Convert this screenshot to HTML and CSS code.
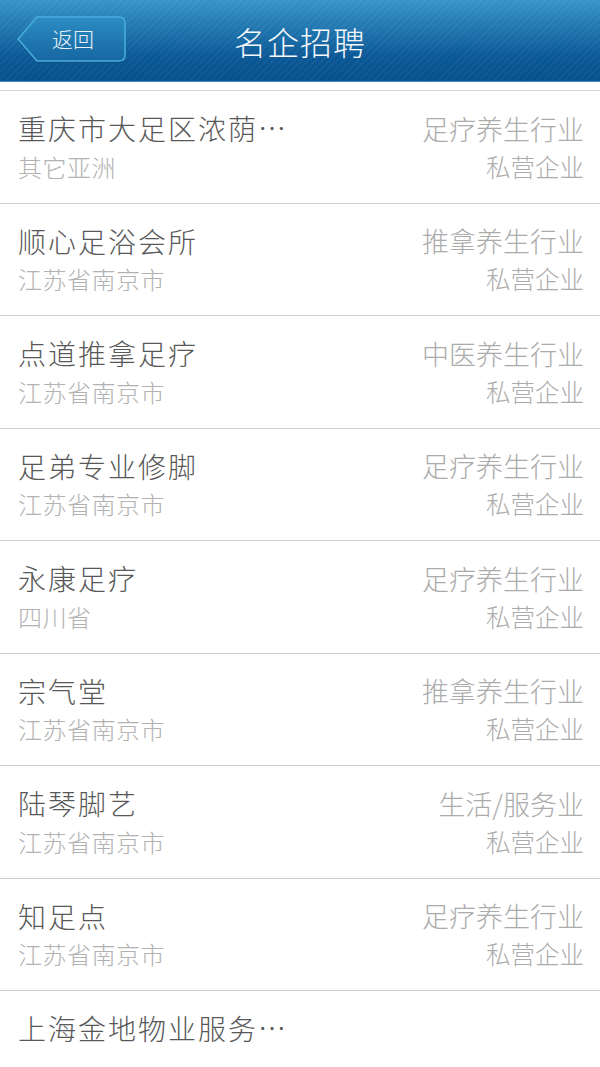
FILE: index.html
```html
<!DOCTYPE html>
<html lang="zh-CN">
<head>
  <meta charset="UTF-8" />
  <meta name="viewport" content="width=device-width, initial-scale=1.0"/>
  <title>名企招聘</title>
  <link rel="stylesheet" href="styles.css">
</head>
<body>

  <header class="topbar">
    <div class="back">
      <svg class="back-shape" width="112" height="50" viewBox="0 0 112 50">
        <defs>
          <linearGradient id="btnFill" x1="0" y1="0" x2="0" y2="1">
            <stop offset="0" stop-color="#2c8cc3"/>
            <stop offset="1" stop-color="#1667a2"/>
          </linearGradient>
        </defs>
        <path d="M2 26 L21 4 H103 Q109 4 109 10 V42 Q109 48 103 48 H21 Z" fill="#0a4a7c" opacity="0.6"/>
        <path d="M2 24 L21 2 H103 Q109 2 109 8 V40 Q109 46 103 46 H21 Z" fill="url(#btnFill)" stroke="#48aedd" stroke-width="1.5"/>
      </svg>
      <span class="back-label">返回</span>
    </div>
    <h1 class="title">名企招聘</h1>
    <div></div>
  </header>

  <ul class="list" id="companyList"></ul>

  <script>
    const companies = [
      { name: "重庆市大足区浓荫…", area: "其它亚洲", trade: "足疗养生行业", kind: "私营企业" },
      { name: "顺心足浴会所", area: "江苏省南京市", trade: "推拿养生行业", kind: "私营企业" },
      { name: "点道推拿足疗", area: "江苏省南京市", trade: "中医养生行业", kind: "私营企业" },
      { name: "足弟专业修脚", area: "江苏省南京市", trade: "足疗养生行业", kind: "私营企业" },
      { name: "永康足疗", area: "四川省", trade: "足疗养生行业", kind: "私营企业" },
      { name: "宗气堂", area: "江苏省南京市", trade: "推拿养生行业", kind: "私营企业" },
      { name: "陆琴脚艺", area: "江苏省南京市", trade: "生活/服务业", kind: "私营企业" },
      { name: "知足点", area: "江苏省南京市", trade: "足疗养生行业", kind: "私营企业" },
      { name: "上海金地物业服务…", area: "", trade: "", kind: "" },
    ];

    const list = document.getElementById("companyList");

    companies.forEach(c => {
      const li = document.createElement("li");
      li.className = "row";
      li.innerHTML = `
        <span class="name">${c.name}</span>
        <span class="trade">${c.trade}</span>
        <span class="area">${c.area}</span>
        <span class="kind">${c.kind}</span>
      `;
      list.appendChild(li);
    });
  </script>
</body>
</html>
```

FILE: styles.css
```css
* { box-sizing: border-box; }
body {
  margin: 0;
  background: #fff;
  font-family: "Noto Sans CJK SC", "Noto Sans", sans-serif;
  font-weight: 300;
}

.topbar {
  height: 82px;
  display: grid;
  grid-template-columns: 1fr auto 1fr;
  align-items: center;
  background:
    repeating-linear-gradient(135deg, rgba(255,255,255,0.035) 0 2px, rgba(0,0,0,0) 2px 5px),
    linear-gradient(#3794c9, #0b5896 70%, #06508c);
  border-bottom: 1px solid #3b8fc4;
}

.back {
  display: grid;
  width: 112px;
  height: 50px;
  margin-left: 16px;
  margin-top: -2px;
}
.back-shape,
.back-label {
  grid-area: 1 / 1;
}
.back-label {
  align-self: center;
  justify-self: center;
  margin-left: 2px;
  margin-top: -3px;
  color: #eaf3f9;
  font-size: 21px;
}

.title {
  margin: 0;
  color: #f4f8fb;
  font-size: 32px;
  font-weight: 300;
  letter-spacing: 1px;
}

.list {
  list-style: none;
  margin: 8px 0 0;
  padding: 0;
  border-top: 1.5px solid #d4d4d4;
}

.row {
  height: 112.5px;
  padding: 19px 16px 0 18px;
  border-bottom: 1.5px solid #cfcfcf;
  display: grid;
  grid-template-columns: 1fr auto;
  grid-template-rows: 36px 30px;
  row-gap: 5px;
  align-items: center;
}

.name {
  color: #585858;
  font-size: 28px;
  letter-spacing: 2px;
  white-space: nowrap;
}
.trade {
  color: #ababab;
  font-size: 27px;
  text-align: right;
}
.area {
  color: #b2b2b2;
  font-size: 24px;
  letter-spacing: 0.5px;
}
.kind {
  color: #ababab;
  font-size: 24.5px;
  text-align: right;
}
```
